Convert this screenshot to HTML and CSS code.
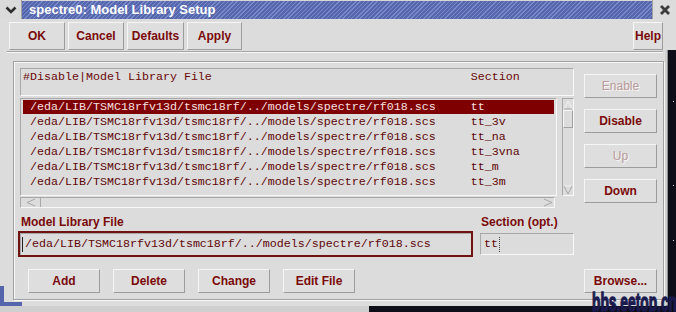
FILE: index.html
```html
<!DOCTYPE html>
<html>
<head>
<meta charset="utf-8">
<link rel="stylesheet" href="styles.css">
</head>
<body>
<div class="screen">
  <div class="window">
    <div class="titlebar">
      <div class="menu-btn">
        <svg width="12" height="8" viewBox="0 0 12 8"><path d="M1.5 1.5 L6 6 L10.5 1.5" stroke="#2e2e2e" stroke-width="2.6" fill="none"/></svg>
      </div>
      <div class="title">spectre0: Model Library Setup</div>
      <div class="close-btn">
        <svg width="12" height="12" viewBox="0 0 12 12"><path d="M2 2 L10 10 M10 2 L2 10" stroke="#3a3a3a" stroke-width="2.8"/></svg>
      </div>
    </div>
    <div class="client">
      <div class="toolbar">
        <button class="btn tb-ok">OK</button>
        <button class="btn tb-cancel">Cancel</button>
        <button class="btn tb-defaults">Defaults</button>
        <button class="btn tb-apply">Apply</button>
        <button class="btn tb-help">Help</button>
      </div>
      <div class="body">
        <div class="main">
          <div class="sep"></div>
          <div class="group">
            <div class="top">
              <div class="listcol">
                <div class="listhead mono"><span class="c1">#Disable|Model Library File</span><span>Section</span></div>
                <div class="listwrap">
                  <div class="list mono">
                    <div class="row sel"><span class="c1"> /eda/LIB/TSMC18rfv13d/tsmc18rf/../models/spectre/rf018.scs</span><span>tt</span></div>
                    <div class="row"><span class="c1"> /eda/LIB/TSMC18rfv13d/tsmc18rf/../models/spectre/rf018.scs</span><span>tt_3v</span></div>
                    <div class="row"><span class="c1"> /eda/LIB/TSMC18rfv13d/tsmc18rf/../models/spectre/rf018.scs</span><span>tt_na</span></div>
                    <div class="row"><span class="c1"> /eda/LIB/TSMC18rfv13d/tsmc18rf/../models/spectre/rf018.scs</span><span>tt_3vna</span></div>
                    <div class="row"><span class="c1"> /eda/LIB/TSMC18rfv13d/tsmc18rf/../models/spectre/rf018.scs</span><span>tt_m</span></div>
                    <div class="row"><span class="c1"> /eda/LIB/TSMC18rfv13d/tsmc18rf/../models/spectre/rf018.scs</span><span>tt_3m</span></div>
                  </div>
                  <div class="vscroll">
                    <div class="arrow"><svg width="10" height="10" viewBox="0 0 10 10"><path d="M1 9 L5 1 L9 9" stroke="#f2f2f2" stroke-width="1" fill="none"/><path d="M1 9 H9" stroke="#a8a8a8"/></svg></div>
                    <div class="thumb"></div>
                    <div class="trough"></div>
                    <div class="arrow"><svg width="10" height="10" viewBox="0 0 10 10"><path d="M1 1 H9" stroke="#f2f2f2"/><path d="M9 1 L5 9 L1 1" stroke="#a8a8a8" stroke-width="1" fill="none"/></svg></div>
                  </div>
                </div>
                <div class="hscroll">
                  <div class="harrow left"><svg width="10" height="9" viewBox="0 0 10 9"><path d="M9 1 L1 4.5 L9 8" stroke="#a8a8a8" fill="none"/></svg></div>
                  <div class="htrough"></div>
                  <div class="harrow right"><svg width="10" height="9" viewBox="0 0 10 9"><path d="M1 1 L9 4.5 L1 8" stroke="#a8a8a8" fill="none"/></svg></div>
                </div>
              </div>
              <div class="sidebtns">
                <button class="btn side disabled">Enable</button>
                <button class="btn side">Disable</button>
                <button class="btn side disabled">Up</button>
                <button class="btn side">Down</button>
              </div>
            </div>
            <div class="fields">
              <div class="fcol main-field">
                <div class="flabel">Model Library File</div>
                <div class="entry focus mono"><span class="cursor"></span>/eda/LIB/TSMC18rfv13d/tsmc18rf/../models/spectre/rf018.scs</div>
              </div>
              <div class="fcol sect">
                <div class="flabel">Section (opt.)</div>
                <div class="entry plain mono">tt<span class="cursor dotted"></span></div>
              </div>
            </div>
            <div class="actions">
              <button class="btn act">Add</button>
              <button class="btn act">Delete</button>
              <button class="btn act">Change</button>
              <button class="btn act">Edit File</button>
              <button class="btn act browse">Browse...</button>
            </div>
          </div>
        </div>
        <div class="side-strip">
          <span class="dot d1"></span>
          <span class="dot d2"></span>
          <span class="dot d3"></span>
        </div>
      </div>
    </div>
    <div class="corner"></div>
  </div>
  <div class="bottomstrip"></div>
  <div class="watermark">bbs.eetop.cn</div>
</div>
</body>
</html>
```
FILE: styles.css
```css
* { box-sizing: border-box; margin: 0; padding: 0; }
html, body { width: 676px; height: 312px; overflow: hidden; background: #0e0e18; }
body { font-family: "Liberation Sans", Arial, sans-serif; }

.screen { position: relative; width: 676px; height: 312px; background: #0e0e18; }

.window {
  position: relative;
  width: 676px;
  height: 306px;
  display: flex;
  flex-direction: column;
}

/* title bar */
.titlebar { height: 19px; display: flex; background: #d6d6d6; }
.menu-btn {
  width: 22px; height: 19px;
  display: flex; align-items: center; justify-content: center;
  background: #dadada;
  border-right: 1px solid #a0a0a0;
}
.title {
  flex: 1;
  height: 18px;
  margin-top: 1px;
  background: repeating-linear-gradient(135deg, #5767ad 0px, #5767ad 2px, #7888c8 2px, #7888c8 3px);
  color: #ffffff;
  font-weight: bold;
  font-size: 13px;
  line-height: 17px;
  padding-left: 7px;
}
.close-btn {
  width: 24px; height: 19px;
  display: flex; align-items: center; justify-content: center;
  background: #dcdcdc;
  border-left: 1px solid #a0a0a0;
}

/* client */
.client { flex: 1; display: flex; flex-direction: column; }

.btn {
  font-family: "Liberation Sans", Arial, sans-serif;
  font-weight: bold;
  font-size: 12px;
  color: #7a0a0a;
  background: #dedede;
  border: 1px solid;
  border-color: #f6f6f6 #9c9c9c #9c9c9c #f6f6f6;
  display: flex; align-items: center; justify-content: center;
}
.btn.disabled { color: #b89a9a; text-shadow: 1px 1px 0 #f6f6f6; font-weight: normal; }

.toolbar { height: 31px; padding: 3px 0 0 9px; display: flex; gap: 3px; background: #dcdcdc; }
.toolbar .btn { height: 28px; }
.tb-ok { width: 56px; }
.tb-cancel { width: 56px; }
.tb-defaults { width: 57px; }
.tb-apply { width: 55px; }
.tb-help { width: 30px; margin-left: auto; margin-right: 13px; height: 27px; }

.body { flex: 1; display: flex; }
.main {
  width: 668px;
  background: #dcdcdc;
  border-right: 1px solid #8e8e8e;
  box-shadow: inset -2px 0 0 #cfcfcf;
}
.side-strip { flex: 1; position: relative; background: #0e0e18; }
.dot { position: absolute; left: 5px; width: 1px; height: 1px; background: #e0e0e0; }
.d1 { top: 51px; }
.d2 { top: 135px; }
.d3 { top: 190px; }

.sep { height: 2px; margin: 1px 4px 0 7px; border-top: 1px solid #a4a4a4; border-bottom: 1px solid #f8f8f8; }

.group {
  margin: 8px 0 0 13px;
  width: 651px;
  height: 239px;
  border: 1px solid #a0a0a0;
  box-shadow: inset 1px 1px 0 #f8f8f8, 1px 1px 0 #f8f8f8;
  padding: 6px;
  display: flex;
  flex-direction: column;
}

.mono { font-family: "Liberation Mono", "Courier New", monospace; font-size: 11.67px; }
.c1 { display: inline-block; width: 64ch; white-space: pre; }

.top { height: 140px; display: flex; }
.listcol { width: 554px; display: flex; flex-direction: column; }
.listhead {
  height: 28px;
  border: 1px solid;
  border-color: #a8a8a8 #f8f8f8 #f8f8f8 #a8a8a8;
  padding: 1px 0 0 2px;
  line-height: 15px;
  color: #6a0808;
  white-space: pre;
}
.listwrap { margin-top: 2px; height: 98px; display: flex; }
.list {
  width: 537px;
  border: 1px solid;
  border-color: #a8a8a8 #f8f8f8 #f8f8f8 #a8a8a8;
  padding: 1px 2px;
  color: #5e0606;
}
.row { height: 15px; line-height: 15px; white-space: pre; }
.row.sel { background: #7e0000; color: #f6e2e2; height: 14px; margin-bottom: 1px; line-height: 14px; }

.vscroll {
  margin-left: 5px;
  width: 12px;
  border: 1px solid;
  border-color: #a8a8a8 #f8f8f8 #f8f8f8 #a8a8a8;
  display: flex; flex-direction: column;
}
.arrow { height: 11px; display: flex; align-items: center; justify-content: center; }
.thumb { height: 18px; border: 1px solid; border-color: #f8f8f8 #a0a0a0 #a0a0a0 #f8f8f8; }
.trough { flex: 1; }

.hscroll {
  margin-top: 1px;
  width: 535px;
  height: 11px;
  border: 1px solid;
  border-color: #a8a8a8 #f8f8f8 #f8f8f8 #a8a8a8;
  display: flex;
}
.harrow { width: 12px; display: flex; align-items: center; justify-content: center; }
.harrow.left { width: 20px; border-right: 1px solid #a8a8a8; }
.htrough { flex: 1; }

.sidebtns {
  margin-left: 10px;
  width: 73px;
  padding-top: 6px;
  display: flex; flex-direction: column; gap: 11px;
}
.sidebtns .btn { height: 24px; }

.fields { margin-top: 5px; display: flex; }
.fcol.main-field { width: 455px; margin-left: -2px; }
.fcol.sect { width: 94px; margin-left: 7px; }
.flabel {
  height: 18px;
  line-height: 18px;
  font-weight: bold;
  font-size: 12px;
  color: #7a0a0a;
  padding-left: 3px;
}
.fcol.sect .flabel { padding-left: 1px; }
.entry { white-space: pre; color: #5e0606; }
.entry.focus {
  height: 26px;
  border: 2px solid #6e1212;
  box-shadow: inset 1px 1px 0 #a8a8a8;
  padding: 0 0 0 2px;
  line-height: 22px;
  display: flex; align-items: center;
}
.entry.plain {
  margin-top: 2px;
  height: 22px;
  border: 1px solid;
  border-color: #a8a8a8 #f8f8f8 #f8f8f8 #a8a8a8;
  padding-left: 3px;
  line-height: 20px;
  display: flex; align-items: center;
}
.cursor { display: inline-block; width: 2px; height: 15px; border-left: 1px solid #222; margin-right: 1px; }
.cursor.dotted { border-left: 1px dotted #444; margin-left: 1px; }

.actions { margin-top: 12px; height: 24px; display: flex; gap: 13px; padding-left: 8px; }
.actions .btn { width: 72px; height: 24px; }
.actions .browse { margin-left: auto; width: 73px; }

.corner {
  position: absolute;
  left: 0; top: 286px;
  width: 22px; height: 20px;
  border-left: 4px solid #5565ab;
  border-bottom: 4px solid #5565ab;
}

.bottomstrip {
  position: absolute;
  left: 0; top: 306px;
  width: 369px; height: 6px;
  background: #cfcfcf;
}

.watermark {
  position: absolute;
  left: 592px; top: 289px;
  font-family: "Liberation Sans", Arial, sans-serif;
  font-weight: bold;
  font-size: 26px;
  line-height: 26px;
  color: #1a1a4e;
  -webkit-text-stroke: 1.4px #1a1a4e;
  transform: scaleX(0.53);
  transform-origin: left top;
  white-space: nowrap;
}
```
